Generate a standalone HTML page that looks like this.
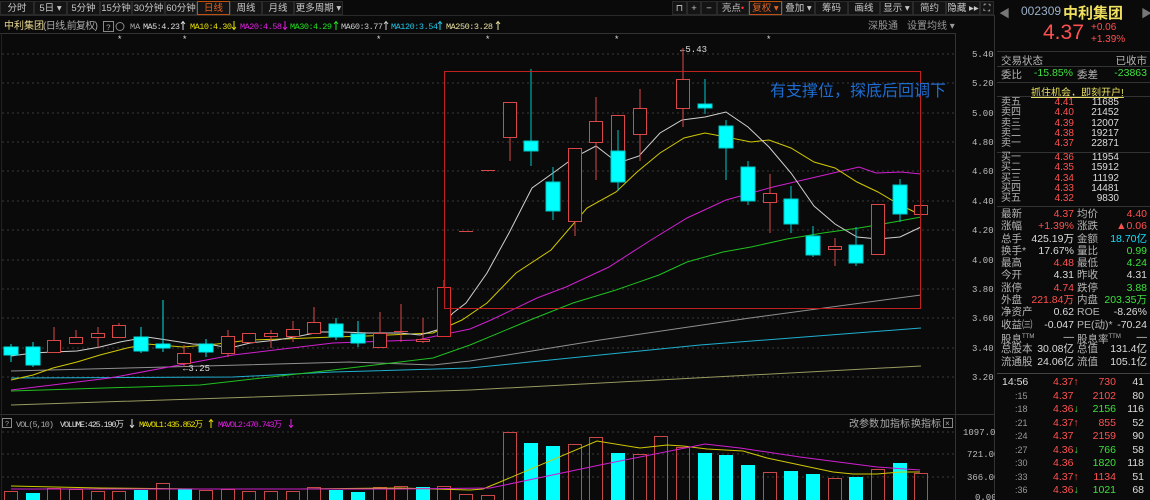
<!DOCTYPE html>
<html><head><meta charset="utf-8">
<style>
html,body{margin:0;padding:0;background:#0a0a0a;width:1150px;height:500px;overflow:hidden;font-family:"Liberation Sans","Noto Sans CJK SC",sans-serif;}
.a{position:absolute;white-space:nowrap;}
.btn{position:absolute;top:1px;height:14px;line-height:14px;font-size:9.5px;color:#c8c8c8;text-align:center;background:#141414;border:1px solid #2a2a2a;box-sizing:border-box;white-space:nowrap;overflow:hidden;}
.rp{position:absolute;left:997px;top:0;width:153px;height:500px;background:#0a0a0a;font-size:10.5px;}
.rp div,.rp span{white-space:nowrap;}
.l{position:absolute;left:4px;color:#b4b4b4;}
.r{position:absolute;text-align:right;}
.red{color:#ff5050}.grn{color:#3ee03e}.wht{color:#dcdcdc}.cy{color:#10e0ff}
.hl{position:absolute;left:0;width:153px;height:1px;background:#333;}
</style></head><body>
<svg class="a" style="left:0;top:0" width="995" height="500" font-family="Liberation Mono,Noto Sans CJK SC,monospace">
<line x1="0" y1="15.5" x2="995" y2="15.5" stroke="#2a2a2a"/>
<line x1="0" y1="33.5" x2="955" y2="33.5" stroke="#333"/>
<line x1="955.5" y1="33" x2="955.5" y2="500" stroke="#333"/>
<line x1="994.5" y1="15" x2="994.5" y2="500" stroke="#333"/>
<line x1="0" y1="414.5" x2="995" y2="414.5" stroke="#333"/>
<line x1="1.5" y1="33" x2="1.5" y2="500" stroke="#222"/>
<g stroke="#3a3a3a" stroke-dasharray="2,3">
<line x1="2" y1="54" x2="955" y2="54"/><line x1="2" y1="83" x2="955" y2="83"/><line x1="2" y1="113" x2="955" y2="113"/><line x1="2" y1="142" x2="955" y2="142"/><line x1="2" y1="171" x2="955" y2="171"/><line x1="2" y1="201" x2="955" y2="201"/><line x1="2" y1="230" x2="955" y2="230"/><line x1="2" y1="260" x2="955" y2="260"/><line x1="2" y1="289" x2="955" y2="289"/><line x1="2" y1="318" x2="955" y2="318"/><line x1="2" y1="348" x2="955" y2="348"/><line x1="2" y1="377" x2="955" y2="377"/>
<line x1="2" y1="432" x2="955" y2="432"/><line x1="2" y1="454" x2="955" y2="454"/><line x1="2" y1="477" x2="955" y2="477"/>
</g>
<g fill="#bbb" font-size="9">
<text x="972" y="57">5.40</text><text x="972" y="86">5.20</text><text x="972" y="116">5.00</text><text x="972" y="145">4.80</text><text x="972" y="174">4.60</text><text x="972" y="204">4.40</text><text x="972" y="233">4.20</text><text x="972" y="263">4.00</text><text x="972" y="292">3.80</text><text x="972" y="321">3.60</text><text x="972" y="351">3.40</text><text x="972" y="380">3.20</text>
<text x="963" y="435">1097.00</text><text x="967" y="457">721.00</text><text x="967" y="480">366.00</text><text x="975" y="500">0.00</text>
</g>
<text x="4" y="29" font-size="10" fill="#e8d890" font-family="Liberation Sans,Noto Sans CJK SC,sans-serif">中利集团</text>
<text x="43" y="29" font-size="10" fill="#aaa" font-family="Liberation Sans,Noto Sans CJK SC,sans-serif" textLength="55">(日线,前复权)</text>
<rect x="103.5" y="21.5" width="10" height="10" fill="none" stroke="#888"/><text x="106" y="30" font-size="8" fill="#aaa">?</text>
<circle cx="120" cy="26.5" r="4" fill="none" stroke="#888"/>
<g font-size="8.5">
<text x="130" y="29" fill="#aaa">MA</text>
<text x="143" y="29" fill="#ddd" textLength="37">MA5:4.23</text>
<text x="190" y="29" fill="#e8e000" textLength="42">MA10:4.30</text>
<text x="240" y="29" fill="#e020e0" textLength="42">MA20:4.58</text>
<text x="290" y="29" fill="#20e020" textLength="42">MA30:4.29</text>
<text x="341" y="29" fill="#ccc" textLength="42">MA60:3.77</text>
<text x="391" y="29" fill="#20c8e8" textLength="47">MA120:3.54</text>
<text x="446" y="29" fill="#e8e0a0" textLength="47">MA250:3.28</text>
</g>
<g stroke-width="1" fill="none">
<path d="M183 30V22M181 24L183 21.5 185 24" stroke="#ddd"/>
<path d="M234 21V29M232 27L234 29.5 236 27" stroke="#e8e000"/>
<path d="M285 21V29M283 27L285 29.5 287 27" stroke="#e020e0"/>
<path d="M336 30V22M334 24L336 21.5 338 24" stroke="#20e020"/>
<path d="M386 30V22M384 24L386 21.5 388 24" stroke="#ccc"/>
<path d="M440 30V22M438 24L440 21.5 442 24" stroke="#20c8e8"/>
<path d="M498 30V22M496 24L498 21.5 500 24" stroke="#e8e0a0"/>
</g>
<g font-family="Liberation Sans,Noto Sans CJK SC,sans-serif" font-size="10" fill="#999"><text x="868" y="29">深股通</text><text x="907" y="29">设置均线 ▾</text></g>
<g fill="#ddd" font-size="9"><text x="117" y="42">*</text><text x="182" y="42">*</text><text x="376" y="42">*</text><text x="485" y="42">*</text><text x="614" y="42">*</text><text x="766" y="42">*</text></g>
<g fill="none" stroke-width="1">
<polyline stroke="#9a9a60" points="11,405 470,390 921,366"/>
<polyline stroke="#20b0d0" points="11,378 233,377 333,372 470,368 700,345 921,328"/>
<polyline stroke="#909090" points="11,371 167,367 350,362 433,365 470,361 600,340 750,318 921,295"/>
<polyline stroke="#20c020" points="11,391 200,385 333,370 433,358 470,345 530,320 573,303 616,290 659,275 687,262 723,252 751,247 787,239 823,233 859,228 894,222 921,217"/>
<polyline stroke="#d020d0" points="11,390 110,378 233,355 333,343 417,340 470,329 491,320 537,298 566,287 609,267 651,240 687,218 726,200 773,187 816,177 859,167 876,173 901,172 921,174"/>
<polyline stroke="#d0c800" points="11,380 33,375 53,368 77,362 100,355 127,348 147,344 183,347 217,344 250,340 283,339 333,337 367,336 410,334 433,333 462,320 487,303 516,273 551,250 587,208 616,192 637,172 660,153 684,138 705,133 726,137 751,142 769,140 791,148 814,162 835,168 857,182 878,192 900,205 921,215"/>
<polyline stroke="#d0d0d0" points="11,356 33,353 53,352 77,351 100,347 120,342 147,337 167,340 193,344 213,345 230,348 250,343 277,340 300,336 320,332 343,332 367,333 400,333 420,335 437,330 453,313 466,303 487,273 509,233 532,188 553,173 575,157 596,146 618,163 639,156 660,133 682,120 705,117 726,112 748,127 769,147 791,173 814,206 835,224 857,237 878,239 900,237 921,227"/>
</g>
<g stroke-width="1">
<g stroke="#00e0e0" fill="#00ffff">
<line x1="11" y1="344" x2="11" y2="362"/><rect x="4" y="347" width="14" height="8"/>
<line x1="33" y1="342" x2="33" y2="367"/><rect x="26" y="347" width="14" height="18"/>
<line x1="141" y1="327" x2="141" y2="353"/><rect x="134" y="337" width="14" height="14"/>
<line x1="163" y1="300" x2="163" y2="352"/><rect x="156" y="344" width="14" height="4"/>
<line x1="206" y1="339" x2="206" y2="357"/><rect x="199" y="344" width="14" height="8"/>
<line x1="336" y1="318" x2="336" y2="340"/><rect x="329" y="324" width="14" height="13"/>
<line x1="358" y1="321" x2="358" y2="347"/><rect x="351" y="334" width="14" height="9"/>
</g>
<g stroke="#d84848" fill="#0a0a0a">
<line x1="54" y1="327" x2="54" y2="352"/><rect x="47.5" y="340.5" width="13" height="12"/>
<line x1="76" y1="330" x2="76" y2="344"/><rect x="69.5" y="337.5" width="13" height="6"/>
<line x1="98" y1="327" x2="98" y2="348"/><rect x="91.5" y="333.5" width="13" height="4"/>
<line x1="119" y1="323" x2="119" y2="337"/><rect x="112.5" y="325.5" width="13" height="12"/>
<line x1="184" y1="345" x2="184" y2="367"/><rect x="177.5" y="353.5" width="13" height="10"/>
<line x1="228" y1="330" x2="228" y2="357"/><rect x="221.5" y="336.5" width="13" height="17"/>
<line x1="249" y1="333" x2="249" y2="343"/><rect x="242.5" y="333.5" width="13" height="9"/>
<line x1="271" y1="330" x2="271" y2="348"/><rect x="264.5" y="333.5" width="13" height="3"/>
<line x1="293" y1="321" x2="293" y2="342"/><rect x="286.5" y="329.5" width="13" height="7"/>
<line x1="314" y1="307" x2="314" y2="333"/><rect x="307.5" y="322.5" width="13" height="11"/>
<line x1="380" y1="312" x2="380" y2="347"/><rect x="373.5" y="333.5" width="13" height="14"/>
<line x1="401" y1="304" x2="401" y2="342"/><line x1="394" y1="331.5" x2="408" y2="331.5"/>
<line x1="423" y1="318" x2="423" y2="343"/><rect x="416.5" y="339.5" width="13" height="2"/>
<line x1="444" y1="280" x2="444" y2="337"/><rect x="437.5" y="287.5" width="13" height="49" stroke="#e03030"/>
</g>
<g stroke="#d84848" fill="#0a0a0a">
<line x1="459" y1="231.5" x2="473" y2="231.5"/>
<line x1="481" y1="170.5" x2="495" y2="170.5"/>
<line x1="510" y1="138" x2="510" y2="161"/><rect x="503.5" y="102.5" width="13" height="35"/>
<line x1="575" y1="221" x2="575" y2="236"/><rect x="568.5" y="148.5" width="13" height="73"/>
<line x1="596" y1="97" x2="596" y2="180"/><rect x="589.5" y="121.5" width="13" height="21"/>
<rect x="611.5" y="115.5" width="13" height="63"/>
<line x1="640" y1="89" x2="640" y2="161"/><rect x="633.5" y="108.5" width="13" height="26"/>
<line x1="683" y1="48" x2="683" y2="127"/><rect x="676.5" y="79.5" width="13" height="29"/>
<line x1="770" y1="174" x2="770" y2="233"/><rect x="763.5" y="193.5" width="13" height="9"/>
<line x1="835" y1="238" x2="835" y2="266"/><rect x="828.5" y="246.5" width="13" height="3"/>
<rect x="871.5" y="204.5" width="13" height="50"/>
<rect x="914.5" y="205.5" width="13" height="9"/>
</g>
<g stroke="#00c8c8" fill="#00ffff">
<line x1="531" y1="69" x2="531" y2="166"/><rect x="524" y="141" width="14" height="10"/>
<line x1="553" y1="167" x2="553" y2="220"/><rect x="546" y="182" width="14" height="29"/>
<line x1="618" y1="130" x2="618" y2="191"/><rect x="611" y="151" width="14" height="31"/>
<line x1="705" y1="79" x2="705" y2="114"/><rect x="698" y="104" width="14" height="4"/>
<line x1="726" y1="120" x2="726" y2="180"/><rect x="719" y="126" width="14" height="22"/>
<line x1="748" y1="161" x2="748" y2="205"/><rect x="741" y="167" width="14" height="34"/>
<line x1="791" y1="186" x2="791" y2="233"/><rect x="784" y="199" width="14" height="25"/>
<line x1="813" y1="226" x2="813" y2="257"/><rect x="806" y="236" width="14" height="19"/>
<line x1="856" y1="227" x2="856" y2="266"/><rect x="849" y="245" width="14" height="18"/>
<line x1="900" y1="179" x2="900" y2="222"/><rect x="893" y="185" width="14" height="29"/>
</g>
</g>
<rect x="444.5" y="71.5" width="476" height="237" fill="none" stroke="#c02020"/>
<text x="680" y="52" font-size="9" fill="#ddd">←5.43</text>
<text x="183" y="371" font-size="9" fill="#ddd">←3.25</text>
<svg x="0" y="0" width="955" height="500"><text x="770" y="96" font-size="16" fill="#1e6cd0" font-family="Liberation Sans,Noto Sans CJK SC,sans-serif">有支撑位，探底后回调下</text></svg>
<rect x="2.5" y="418.5" width="9" height="9" fill="none" stroke="#888"/><text x="5" y="426" font-size="7" fill="#aaa">?</text>
<g font-size="8.5"><text x="16" y="427" fill="#aaa" textLength="38">VOL(5,10)</text><text x="60" y="427" fill="#ddd" textLength="64">VOLUME:425.190万</text><text x="139" y="427" fill="#e8e000" textLength="64">MAVOL1:435.852万</text><text x="218" y="427" fill="#e020e0" textLength="64">MAVOL2:470.743万</text></g>
<g fill="none">
<path d="M132 419V427M130 425L132 427.5 134 425" stroke="#ddd"/>
<path d="M211 428V420M209 422L211 419.5 213 422" stroke="#e8e000"/>
<path d="M291 419V427M289 425L291 427.5 293 425" stroke="#e020e0"/>
</g>
<g font-size="10" fill="#aaa" font-family="Liberation Sans,Noto Sans CJK SC,sans-serif"><text x="849" y="427">改参数</text><text x="880" y="427">加指标</text><text x="911" y="427">换指标</text></g>
<rect x="943.5" y="418.5" width="9" height="9" fill="none" stroke="#888"/><text x="945" y="426" font-size="8" fill="#aaa">×</text>
<g fill="#00ffff">
<rect x="26" y="493" width="14" height="7"/><rect x="134" y="490" width="14" height="10"/><rect x="178" y="489" width="14" height="11"/><rect x="329" y="490" width="14" height="10"/><rect x="351" y="492" width="14" height="8"/><rect x="416" y="487" width="14" height="13"/>
<rect x="524" y="443" width="14" height="57"/><rect x="546" y="446" width="14" height="54"/><rect x="611" y="453" width="14" height="47"/><rect x="698" y="453" width="14" height="47"/><rect x="719" y="455" width="14" height="45"/><rect x="741" y="465" width="14" height="35"/><rect x="784" y="471" width="14" height="29"/><rect x="806" y="474" width="14" height="26"/><rect x="849" y="477" width="14" height="23"/><rect x="893" y="463" width="14" height="37"/>
</g>
<g fill="none" stroke="#c84848">
<rect x="4.5" y="491.5" width="13" height="10"/><rect x="47.5" y="488.5" width="13" height="13"/><rect x="69.5" y="489.5" width="13" height="12"/><rect x="91.5" y="491.5" width="13" height="10"/><rect x="112.5" y="491.5" width="13" height="10"/><rect x="156.5" y="483.5" width="13" height="18"/><rect x="199.5" y="490.5" width="13" height="11"/><rect x="221.5" y="489.5" width="13" height="12"/><rect x="242.5" y="491.5" width="13" height="10"/><rect x="264.5" y="491.5" width="13" height="10"/><rect x="286.5" y="491.5" width="13" height="10"/><rect x="307.5" y="487.5" width="13" height="14"/><rect x="373.5" y="487.5" width="13" height="14"/><rect x="394.5" y="486.5" width="13" height="15"/><rect x="437.5" y="486.5" width="13" height="15"/><rect x="459.5" y="494.5" width="13" height="7"/><rect x="481.5" y="495.5" width="13" height="6"/>
<rect x="503.5" y="432.5" width="13" height="69"/><rect x="568.5" y="444.5" width="13" height="57"/><rect x="589.5" y="437.5" width="13" height="64"/><rect x="633.5" y="454.5" width="13" height="47"/><rect x="654.5" y="436.5" width="13" height="65"/><rect x="676.5" y="447.5" width="13" height="54"/><rect x="763.5" y="472.5" width="13" height="29"/><rect x="828.5" y="478.5" width="13" height="23"/><rect x="871.5" y="469.5" width="13" height="32"/><rect x="914.5" y="473.5" width="13" height="28"/>
</g>
<polyline fill="none" stroke="#d0c800" points="11,486 100,488 200,489 300,489 400,488 470,490 483,489 500,482 597,441 640,448 667,445 683,446 707,449 743,451 767,458 800,465 833,472 853,474 877,474 900,472 920,472"/>
<polyline fill="none" stroke="#d020d0" points="11,489 200,489 400,489 490,488 500,486 600,465 705,444 740,448 800,457 877,467 920,470"/>
</svg>
<div class="btn" style="left:0;width:34px">分时</div>
<div class="btn" style="left:34px;width:33px">5日 ▾</div>
<div class="btn" style="left:67px;width:33px">5分钟</div>
<div class="btn" style="left:100px;width:32px">15分钟</div>
<div class="btn" style="left:132px;width:33px">30分钟</div>
<div class="btn" style="left:165px;width:32px">60分钟</div>
<div class="btn" style="left:197px;width:33px;border-color:#c05010;color:#e06020">日线</div>
<div class="btn" style="left:230px;width:32px">周线</div>
<div class="btn" style="left:262px;width:32px">月线</div>
<div class="btn" style="left:294px;width:49px">更多周期 ▾</div>
<div class="btn" style="left:672px;width:15px">⊓</div>
<div class="btn" style="left:687px;width:14px">+</div>
<div class="btn" style="left:701px;width:16px">−</div>
<div class="btn" style="left:717px;width:32px">亮点<span style="color:#f33">•</span></div>
<div class="btn" style="left:749px;width:33px;border-color:#c05010;color:#e06020">复权 ▾</div>
<div class="btn" style="left:782px;width:33px">叠加 ▾</div>
<div class="btn" style="left:815px;width:33px">筹码</div>
<div class="btn" style="left:848px;width:32px">画线</div>
<div class="btn" style="left:880px;width:33px">显示 ▾</div>
<div class="btn" style="left:913px;width:33px">简约</div>
<div class="btn" style="left:946px;width:34px">隐藏 ▸▸</div>
<div class="btn" style="left:980px;width:14px">⛶</div>
<div class="rp">
<div class="a" style="left:2px;top:5px;color:#777;font-size:11px">◀</div>
<div class="a" style="left:24px;top:4px;color:#9ab0c8;font-size:12px">002309</div>
<div class="a" style="left:66px;top:2px;color:#f0e060;font-size:15px;font-weight:bold">中利集团</div>
<div class="a" style="left:144px;top:5px;color:#777;font-size:11px">▶</div>
<div class="a red" style="left:46px;top:21px;font-size:21px">4.37</div>
<div class="a red" style="left:94px;top:22px;font-size:10px">+0.06</div>
<div class="a red" style="left:94px;top:34px;font-size:10px">+1.39%</div>
<div class="hl" style="top:51px"></div>
<div class="l" style="top:53px">交易状态</div><div class="r" style="right:3px;top:53px;color:#b4b4b4">已收市</div>
<div class="hl" style="top:66px"></div>
<div class="l" style="top:67px">委比</div><div class="r grn" style="right:77px;top:67px">-15.85%</div>
<div class="a" style="left:80px;top:67px;color:#b4b4b4">委差</div><div class="r grn" style="right:3px;top:67px">-23863</div>
<div class="hl" style="top:82px"></div>
<div class="a" style="left:34px;top:84px;color:#e8e060;text-decoration:underline;font-size:10px">抓住机会，即刻开户!</div>
<div class="hl" style="top:96px"></div>
<div style="position:absolute;top:98px;left:0;width:153px;line-height:10.3px;font-size:10px">
<div style="position:relative;height:10.3px"><span class="l">卖五</span><span class="r red" style="right:76px">4.41</span><span class="r wht" style="right:31px">11685</span></div>
<div style="position:relative;height:10.3px"><span class="l">卖四</span><span class="r red" style="right:76px">4.40</span><span class="r wht" style="right:31px">21452</span></div>
<div style="position:relative;height:10.3px"><span class="l">卖三</span><span class="r red" style="right:76px">4.39</span><span class="r wht" style="right:31px">12007</span></div>
<div style="position:relative;height:10.3px"><span class="l">卖二</span><span class="r red" style="right:76px">4.38</span><span class="r wht" style="right:31px">19217</span></div>
<div style="position:relative;height:10.3px"><span class="l">卖一</span><span class="r red" style="right:76px">4.37</span><span class="r wht" style="right:31px">22871</span></div>
</div>
<div class="hl" style="top:152px"></div>
<div style="position:absolute;top:153px;left:0;width:153px;line-height:10.3px;font-size:10px">
<div style="position:relative;height:10.3px"><span class="l">买一</span><span class="r red" style="right:76px">4.36</span><span class="r wht" style="right:31px">11954</span></div>
<div style="position:relative;height:10.3px"><span class="l">买二</span><span class="r red" style="right:76px">4.35</span><span class="r wht" style="right:31px">15912</span></div>
<div style="position:relative;height:10.3px"><span class="l">买三</span><span class="r red" style="right:76px">4.34</span><span class="r wht" style="right:31px">11192</span></div>
<div style="position:relative;height:10.3px"><span class="l">买四</span><span class="r red" style="right:76px">4.33</span><span class="r wht" style="right:31px">14481</span></div>
<div style="position:relative;height:10.3px"><span class="l">买五</span><span class="r red" style="right:76px">4.32</span><span class="r wht" style="right:31px">9830</span></div>
</div>
<div class="hl" style="top:206px"></div>
<div style="position:absolute;top:208px;left:0;width:153px;line-height:12.3px;font-size:10.5px">
<div style="position:relative;height:12.3px"><span class="l">最新</span><span class="r red" style="right:76px">4.37</span><span class="a" style="left:80px;color:#b4b4b4">均价</span><span class="r red" style="right:3px">4.40</span></div>
<div style="position:relative;height:12.3px"><span class="l">涨幅</span><span class="r red" style="right:76px">+1.39%</span><span class="a" style="left:80px;color:#b4b4b4">涨跌</span><span class="r red" style="right:3px">▲0.06</span></div>
<div style="position:relative;height:12.3px"><span class="l">总手</span><span class="r wht" style="right:76px">425.19万</span><span class="a" style="left:80px;color:#b4b4b4">金额</span><span class="r cy" style="right:3px">18.70亿</span></div>
<div style="position:relative;height:12.3px"><span class="l">换手*</span><span class="r wht" style="right:76px">17.67%</span><span class="a" style="left:80px;color:#b4b4b4">量比</span><span class="r grn" style="right:3px">0.99</span></div>
<div style="position:relative;height:12.3px"><span class="l">最高</span><span class="r red" style="right:76px">4.48</span><span class="a" style="left:80px;color:#b4b4b4">最低</span><span class="r grn" style="right:3px">4.24</span></div>
<div style="position:relative;height:12.3px"><span class="l">今开</span><span class="r wht" style="right:76px">4.31</span><span class="a" style="left:80px;color:#b4b4b4">昨收</span><span class="r wht" style="right:3px">4.31</span></div>
<div style="position:relative;height:12.3px"><span class="l">涨停</span><span class="r red" style="right:76px">4.74</span><span class="a" style="left:80px;color:#b4b4b4">跌停</span><span class="r grn" style="right:3px">3.88</span></div>
<div style="position:relative;height:12.3px"><span class="l">外盘</span><span class="r red" style="right:76px">221.84万</span><span class="a" style="left:80px;color:#b4b4b4">内盘</span><span class="r grn" style="right:3px">203.35万</span></div>
<div style="position:relative;height:12.3px"><span class="l">净资产</span><span class="r wht" style="right:76px">0.62</span><span class="a" style="left:80px;color:#b4b4b4">ROE</span><span class="r wht" style="right:3px">-8.26%</span></div>
<div style="position:relative;height:12.3px"><span class="l">收益㈢</span><span class="r wht" style="right:76px">-0.047</span><span class="a" style="left:80px;color:#b4b4b4">PE(动)*</span><span class="r wht" style="right:3px">-70.24</span></div>
<div style="position:relative;height:12.3px"><span class="l">股息<sup style="font-size:6px">TTM</sup></span><span class="r wht" style="right:76px">—</span><span class="a" style="left:80px;color:#b4b4b4">股息率<sup style="font-size:6px">TTM</sup></span><span class="r wht" style="right:3px">—</span></div>
<div style="position:relative;height:12.3px"><span class="l">总股本</span><span class="r wht" style="right:76px">30.08亿</span><span class="a" style="left:80px;color:#b4b4b4">总值</span><span class="r wht" style="right:3px">131.4亿</span></div>
<div style="position:relative;height:12.3px"><span class="l">流通股</span><span class="r wht" style="right:76px">24.06亿</span><span class="a" style="left:80px;color:#b4b4b4">流值</span><span class="r wht" style="right:3px">105.1亿</span></div>
</div>
<div class="hl" style="top:373px;background:#444"></div>
<div style="position:absolute;top:376px;left:0;width:153px;line-height:13.5px;font-size:10.5px">
<div style="position:relative;height:13.5px"><span class="a wht" style="left:5px">14:56</span><span class="a red" style="left:56px">4.37↑</span><span class="r red" style="right:34px">730</span><span class="r wht" style="right:6px">41</span></div>
<div style="position:relative;height:13.5px"><span class="a" style="left:18px;color:#999;font-size:9px">:15</span><span class="a red" style="left:56px">4.37</span><span class="r red" style="right:34px">2102</span><span class="r wht" style="right:6px">80</span></div>
<div style="position:relative;height:13.5px"><span class="a" style="left:18px;color:#999;font-size:9px">:18</span><span class="a red" style="left:56px">4.36<span class="grn">↓</span></span><span class="r grn" style="right:34px">2156</span><span class="r wht" style="right:6px">116</span></div>
<div style="position:relative;height:13.5px"><span class="a" style="left:18px;color:#999;font-size:9px">:21</span><span class="a red" style="left:56px">4.37↑</span><span class="r red" style="right:34px">855</span><span class="r wht" style="right:6px">52</span></div>
<div style="position:relative;height:13.5px"><span class="a" style="left:18px;color:#999;font-size:9px">:24</span><span class="a red" style="left:56px">4.37</span><span class="r red" style="right:34px">2159</span><span class="r wht" style="right:6px">90</span></div>
<div style="position:relative;height:13.5px"><span class="a" style="left:18px;color:#999;font-size:9px">:27</span><span class="a red" style="left:56px">4.36<span class="grn">↓</span></span><span class="r grn" style="right:34px">766</span><span class="r wht" style="right:6px">58</span></div>
<div style="position:relative;height:13.5px"><span class="a" style="left:18px;color:#999;font-size:9px">:30</span><span class="a red" style="left:56px">4.36</span><span class="r grn" style="right:34px">1820</span><span class="r wht" style="right:6px">118</span></div>
<div style="position:relative;height:13.5px"><span class="a" style="left:18px;color:#999;font-size:9px">:33</span><span class="a red" style="left:56px">4.37↑</span><span class="r red" style="right:34px">1134</span><span class="r wht" style="right:6px">51</span></div>
<div style="position:relative;height:13.5px"><span class="a" style="left:18px;color:#999;font-size:9px">:36</span><span class="a red" style="left:56px">4.36<span class="grn">↓</span></span><span class="r grn" style="right:34px">1021</span><span class="r wht" style="right:6px">68</span></div>
</div>
</div>
</body></html>
